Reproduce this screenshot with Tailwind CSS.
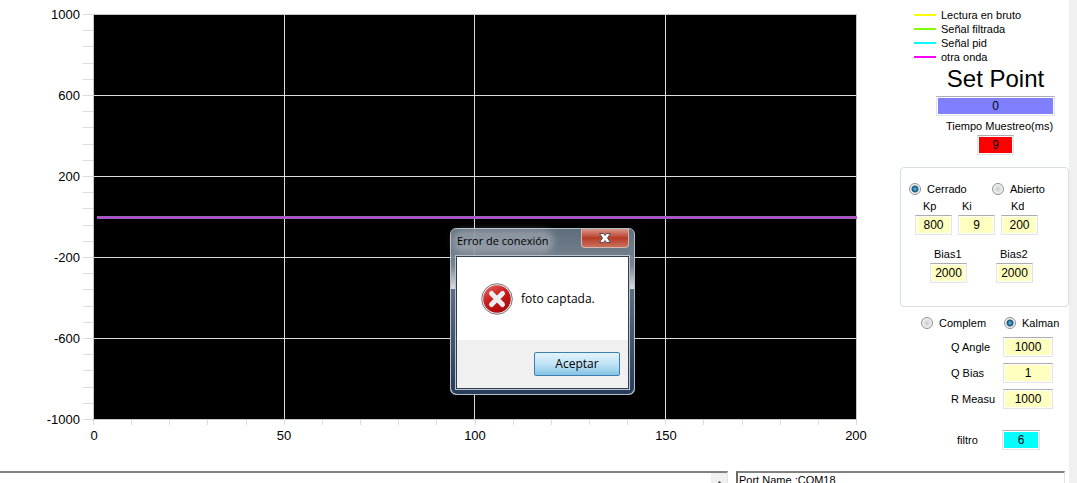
<!DOCTYPE html>
<html lang="es">
<head>
<meta charset="utf-8">
<title>Control PID</title>
<script src="https://cdn.jsdelivr.net/npm/@tailwindcss/browser@4"></script>
</head>
<body class="flex h-screen overflow-hidden bg-[#f0f0f0] pr-2 font-['Liberation_Sans',sans-serif] text-[11px] text-black">
<div class="flex min-w-0 flex-1 flex-col bg-white">
  <div class="flex">
    <main class="relative min-w-0 flex-1">
      <svg class="block w-full font-['Liberation_Sans',sans-serif] text-[13px]" viewBox="0 0 900 471" role="img" aria-label="Gráfica de señales">
        <rect x="94" y="14" width="763" height="405" fill="#000"/>
        <g shape-rendering="crispEdges" fill="none" stroke="#dcdcdc">
          <path id="ticks"/>
          <path d="M94 95.500H857M94 176.500H857M94 257.500H857M94 338.500H857M284.500 14V419M474.500 14V419M665.500 14V419"/>
          <path stroke="#c8c8c8" d="M93.500 14V419.500H857M94 14.500H857M856.500 14V419"/>
        </g>
        <path d="M97 217.500H857" stroke="#9166b4" stroke-width="3"/>
        <path d="M97 217.500H857" stroke="#c63fd6" stroke-width="1"/>
        <g text-anchor="end">
          <text x="80" y="19">1000</text><text x="80" y="100">600</text><text x="80" y="181">200</text>
          <text x="80" y="262">-200</text><text x="80" y="343">-600</text><text x="80" y="424">-1000</text>
        </g>
        <g text-anchor="middle">
          <text x="94" y="440">0</text><text x="284" y="440">50</text><text x="475" y="440">100</text>
          <text x="666" y="440">150</text><text x="856" y="440">200</text>
        </g>
      </svg>

      <section role="dialog" aria-labelledby="dlg-title" class="absolute left-[450px] top-[228px] flex h-[167px] w-[185px] flex-col rounded-md border border-[#b4bec8] bg-linear-to-b from-[#6b7a8a]/90 from-0% via-[#8593a2]/90 via-22% to-[#f4f6f8]/90 to-36% px-[5px] pb-[5px] font-['Open_Sans',sans-serif] text-[12px]">
        <div class="absolute inset-x-0 top-[60px] bottom-0 rounded-b-md bg-linear-to-b from-[#5c6e82] to-[#263c5a]"></div>
        <header class="flex h-[27px] items-start justify-between">
          <h2 id="dlg-title" class="mt-1 rounded-full bg-white/25 px-px text-[11px] leading-4 whitespace-nowrap shadow-[0_0_6px_4px_rgba(255,255,255,0.25)]">Error de conexión</h2>
          <button aria-label="Cerrar" class="flex h-[19px] w-[48px] items-center justify-center rounded-b border border-t-0 border-[#d9b5b0] bg-linear-to-b from-[#d8978d] from-0% via-[#b73a26] via-50% to-[#c9705c]">
            <svg class="h-3 w-[14px]" viewBox="0 0 14 12"><path d="M1.500 1.500H5.500L7 3.500L8.500 1.500H12.500L9.500 6L12.500 10.500H8.500L7 8.500L5.500 10.500H1.500L4.500 6Z" fill="#fff" stroke="#5a4a50"/></svg>
          </button>
        </header>
        <div class="relative flex flex-1 flex-col border border-[#333f4c] bg-white outline outline-[#b9c4ce]">
          <div class="flex flex-1 items-center gap-2 pl-6">
            <svg class="h-8 w-8" viewBox="0 0 32 32">
              <defs><linearGradient id="red" x2=".6" y2="1"><stop stop-color="#e86a64"/><stop offset=".5" stop-color="#c91f20"/><stop offset="1" stop-color="#b00808"/></linearGradient></defs>
              <circle cx="16" cy="16" r="15.300" fill="#eee" stroke="#777"/><circle cx="16" cy="16" r="13.800" fill="url(#red)"/>
              <path d="M10.500 10.500L21.500 21.500M21.500 10.500L10.500 21.500" stroke="#eee" stroke-width="5" stroke-linecap="round"/>
            </svg>
            <p>foto captada.</p>
          </div>
          <footer class="flex h-12 items-center justify-end bg-[#f0f0f0] pr-2">
            <button class="h-6 w-[86px] rounded-xs border border-[#3c7fb1] bg-linear-to-b from-[#e4f3fb] from-0% via-[#bfe3f6] via-50% to-[#86c3e4]">Aceptar</button>
          </footer>
        </div>
      </section>
    </main>

    <aside class="w-[169px] shrink-0 pt-2">
      <ul class="pl-[14px] leading-[14px]">
        <li class="flex items-center gap-[5px]"><span class="h-[2px] w-[22px] bg-[#ffff00]"></span>Lectura en bruto</li>
        <li class="flex items-center gap-[5px]"><span class="h-[2px] w-[22px] bg-[#7fff00]"></span>Señal filtrada</li>
        <li class="flex items-center gap-[5px]"><span class="h-[2px] w-[22px] bg-[#00ffff]"></span>Señal pid</li>
        <li class="flex items-center gap-[5px]"><span class="h-[2px] w-[22px] bg-[#ff00ff]"></span>otra onda</li>
      </ul>
      <div class="flex flex-col items-center pl-[22px]">
        <label for="sp" class="pb-[2px] text-[24px] leading-[30px]">Set Point</label>
        <input id="sp" value="0" class="h-5 w-[119px] border border-[#e3e3ea] border-t-[#abadb3] bg-[#8080ff] text-center text-[12px] inset-ring inset-ring-white">
        <label for="tm" class="mt-[3px] pb-px pl-2 leading-[15px]">Tiempo Muestreo(ms)</label>
        <input id="tm" value="9" class="h-5 w-[37px] border border-[#e3e3ea] border-t-[#abadb3] bg-[#ff0000] text-center text-[12px] inset-ring inset-ring-white">
      </div>

      <div role="group" aria-label="Lazo" class="mt-3 h-[140px] rounded border border-[#d5dfe5] pt-[14px] pl-2">
        <div class="flex h-[14px] items-center">
          <label class="flex w-[83px] items-center gap-[6px]"><input type="radio" name="lazo" checked class="h-3 w-3 appearance-none rounded-full border border-[#8e8f8f] bg-[radial-gradient(circle,#5cc0e8_0,#17527c_3px,#f4f4f4_4px)]">Cerrado</label>
          <label class="flex items-center gap-[6px]"><input type="radio" name="lazo" class="h-3 w-3 appearance-none rounded-full border border-[#8e8f8f] bg-[radial-gradient(circle,#c8c9cb_0,#f4f4f4_5px)]">Abierto</label>
        </div>
        <div class="mt-[3px] flex gap-[6px] pl-[6px]">
          <div class="flex w-[37px] flex-col"><label for="kp" class="pb-px pl-2 leading-[15px]">Kp</label><input id="kp" value="800" class="h-5 border border-[#e3e3ea] border-t-[#abadb3] bg-[#ffffc0] text-center text-[12px] inset-ring inset-ring-white"></div>
          <div class="flex w-[37px] flex-col"><label for="ki" class="pb-px pl-1 leading-[15px]">Ki</label><input id="ki" value="9" class="h-5 border border-[#e3e3ea] border-t-[#abadb3] bg-[#ffffc0] text-center text-[12px] inset-ring inset-ring-white"></div>
          <div class="flex w-[37px] flex-col"><label for="kd" class="pb-px pl-[10px] leading-[15px]">Kd</label><input id="kd" value="200" class="h-5 border border-[#e3e3ea] border-t-[#abadb3] bg-[#ffffc0] text-center text-[12px] inset-ring inset-ring-white"></div>
        </div>
        <div class="mt-3 flex gap-[29px] pl-[21px]">
          <div class="flex w-[37px] flex-col"><label for="b1" class="pb-px pl-1 leading-[15px]">Bias1</label><input id="b1" value="2000" class="h-5 border border-[#e3e3ea] border-t-[#abadb3] bg-[#ffffc0] text-center text-[12px] inset-ring inset-ring-white"></div>
          <div class="flex w-[37px] flex-col"><label for="b2" class="pb-px pl-1 leading-[15px]">Bias2</label><input id="b2" value="2000" class="h-5 border border-[#e3e3ea] border-t-[#abadb3] bg-[#ffffc0] text-center text-[12px] inset-ring inset-ring-white"></div>
        </div>
      </div>

      <div class="mt-[9px] flex h-[14px] items-center pl-[21px]">
        <label class="flex w-[83px] items-center gap-[6px]"><input type="radio" name="filtro-tipo" class="h-3 w-3 appearance-none rounded-full border border-[#8e8f8f] bg-[radial-gradient(circle,#c8c9cb_0,#f4f4f4_5px)]">Complem</label>
        <label class="flex items-center gap-[6px]"><input type="radio" name="filtro-tipo" checked class="h-3 w-3 appearance-none rounded-full border border-[#8e8f8f] bg-[radial-gradient(circle,#5cc0e8_0,#17527c_3px,#f4f4f4_4px)]">Kalman</label>
      </div>
      <div class="mt-[7px] grid grid-cols-[52px_50px] items-center gap-y-[6px] pl-[51px]">
        <label for="qa">Q Angle</label><input id="qa" value="1000" class="h-5 border border-[#e3e3ea] border-t-[#abadb3] bg-[#ffffc0] text-center text-[12px] inset-ring inset-ring-white">
        <label for="qb">Q Bias</label><input id="qb" value="1" class="h-5 border border-[#e3e3ea] border-t-[#abadb3] bg-[#ffffc0] text-center text-[12px] inset-ring inset-ring-white">
        <label for="rm">R Measu</label><input id="rm" value="1000" class="h-5 border border-[#e3e3ea] border-t-[#abadb3] bg-[#ffffc0] text-center text-[12px] inset-ring inset-ring-white">
      </div>
      <div class="mt-[21px] flex items-center pl-[57px]">
        <label for="fl" class="w-[45px]">filtro</label><input id="fl" value="6" class="h-5 w-[38px] border border-[#e3e3ea] border-t-[#abadb3] bg-[#00ffff] text-center text-[12px] inset-ring inset-ring-white">
      </div>
    </aside>
  </div>

  <div class="flex min-h-0 flex-1 gap-2 pr-1">
    <div class="flex min-w-0 flex-1 border-t-2 border-r border-t-[#808080] border-r-[#e3e3e3]">
      <textarea aria-label="Datos" class="min-w-0 flex-1 resize-none overflow-hidden"></textarea>
      <button aria-label="Subir" class="flex w-4 justify-center bg-[#f0f0f0] pt-2"><svg class="h-1 w-[7px]" viewBox="0 0 7 4"><path d="M0 4L3.500 0L7 4Z" fill="#444"/></svg></button>
    </div>
    <textarea aria-label="Puerto" class="w-[329px] resize-none overflow-hidden border-t-2 border-r border-l-2 border-t-[#808080] border-r-[#e3e3e3] border-l-[#696969] px-px leading-[14px]">Port Name :COM18</textarea>
  </div>
</div>
<script>
  // Minor and major tick marks on both axes: 25 vertical steps, 20 horizontal steps.
  let d = '';
  for (let i = 0; i <= 25; i++) d += `M83 ${Math.round(14 + i * 16.2) + 0.5}H93`;
  for (let i = 0; i <= 20; i++) d += `M${Math.round(93 + i * 38.15) + 0.5} 420V425`;
  document.getElementById('ticks').setAttribute('d', d);
</script>
</body>
</html>
